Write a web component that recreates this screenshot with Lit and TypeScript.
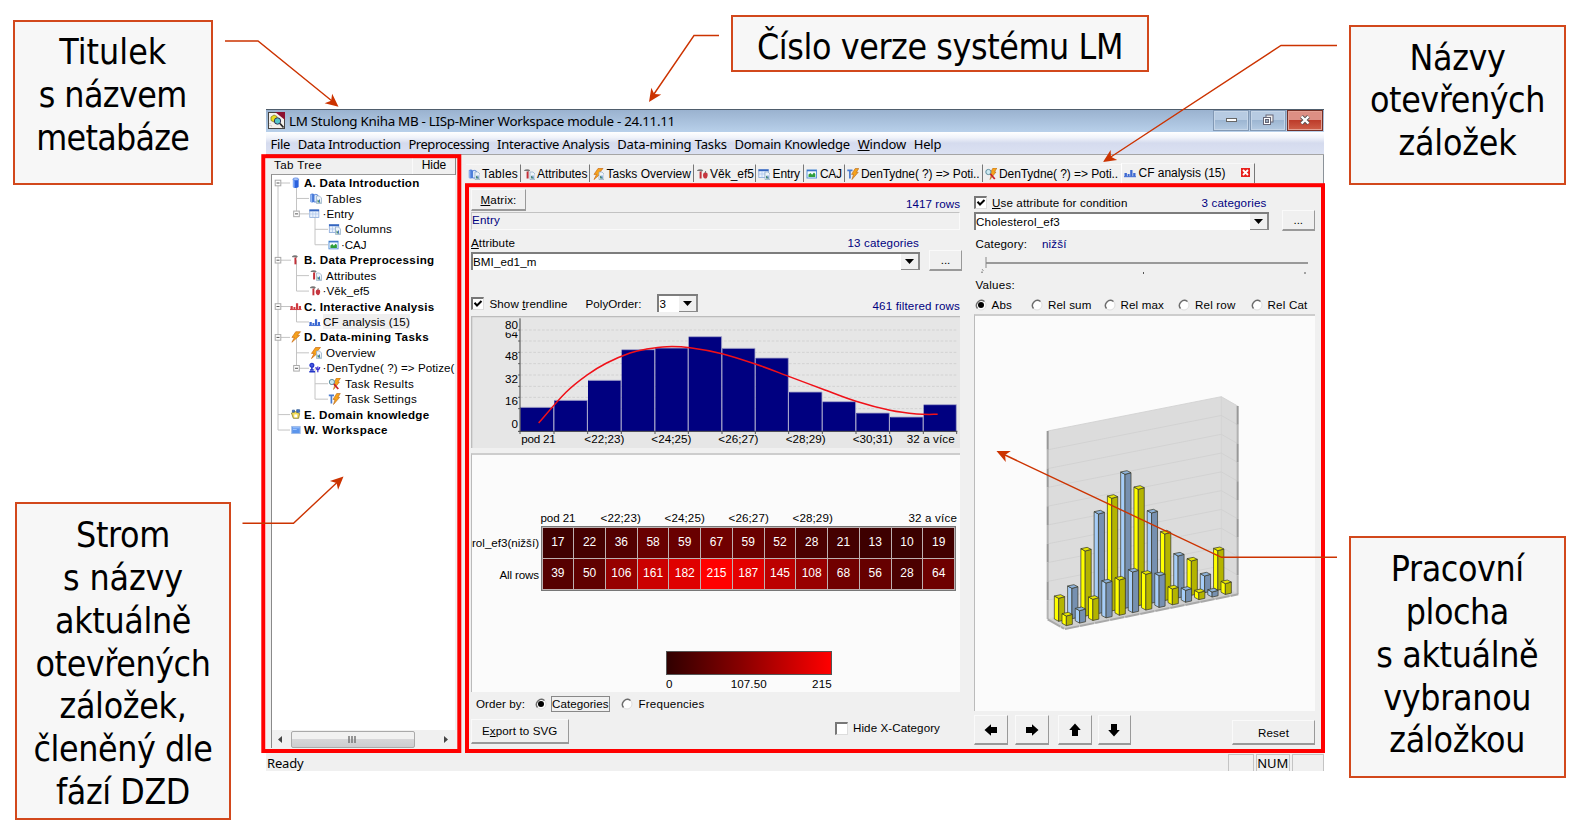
import { LitElement, html, svg, css } from "lit";
import { customElement, property } from "lit/decorators.js";

/* A one-line label whose tracking is adjusted so that it spans exactly `w` pixels.
   An ampersand marks the accelerator letter that follows it. */
@customElement("fit-text")
class FitText extends LitElement {
  @property() text = "";
  @property({ type: Number }) w = 0;
  static styles = css`
    :host { display: inline-block; white-space: pre; flex: none; }
    u { text-decoration-thickness: 1px; text-underline-offset: 1px; }
  `;
  render() {
    const i = this.text.indexOf("&");
    return i < 0
      ? html`<span>${this.text}</span>`
      : html`<span>${this.text.slice(0, i)}<u>${this.text[i + 1]}</u>${this.text.slice(i + 2)}</span>`;
  }
  updated() {
    const s = this.renderRoot.querySelector("span") as HTMLElement;
    s.style.letterSpacing = "0px";
    const n = this.text.replace("&", "").length;
    const natural = s.getBoundingClientRect().width;
    if (this.w && n) {
      s.style.letterSpacing = (this.w - natural) / n + "px";
      this.style.width = this.w + "px";
    }
  }
}

const t = (text: string, w: number, cls = "") => html`<fit-text class=${cls} .text=${text} .w=${w}></fit-text>`;

const doc = svg`<path d="M7 4h3l2 2v5.500H7z" fill="#eef4fa" stroke="#8fabc4" stroke-width=".7"/><path d="M8 10.500v-3l1.300 1 2 2z" fill="#4a8c6c"/><path d="M10 7.500v3" stroke="#4677c8"/>`;
const hammer = svg`<path d="M1 2.200Q3 .6 6 1.400L7.200 2.400 6 3.600H4.600V3H1.400z" fill="#777"/><path d="M3.600 3.500h2V10.500H3.600z" fill="#c33038"/>`;
const bars = (c: string) => svg`<path d="M.5 6h2.400v3.500H.5zM3.600 7h2v2.500h-2zM6.200 3h2.300v6.500H6.200zM9.200 6h2.300v3.500H9.200z" fill=${c}/><path d="M0 9.700h12" stroke=${c} stroke-width="1"/>`;
const bolt = svg`<path d="M6 .5h5L7.600 4.400H10L2 11.500 4.600 6.400H2z" fill="#f6a21c" stroke="#c96a12" stroke-width=".7"/>`;
const table = svg`<rect x=".8" y="1.500" width="9.500" height="8" fill="#eaf2fd" stroke="#86a6d8" stroke-width=".8"/><path d="M.5 2.300h10" stroke="#3565c0" stroke-width="1.800"/><path d="M4 3v6.500M7 3v6.500M1 6h9" stroke="#a9c3ea" stroke-width=".7"/>`;
const icons: Record<string, unknown> = {
  db: svg`<path d="M3 2v8.200q3 2 6 0V2z" fill="#2c62dd"/><path d="M4 2.500v8" stroke="#8db6ff" stroke-width="1.400"/><ellipse cx="6" cy="2" rx="3" ry="1.300" fill="#b3cdf8" stroke="#2c62dd" stroke-width=".6"/>`,
  tables: svg`<path d="M.8 2.200q2-1.400 4 0v7.600q-2 1.400-4 0z" fill="#4c7edb"/><path d="M1.800 2.500v8" stroke="#a7c5fa"/><path d="M4.500 3q1.600-1.300 3.800 0v7H4.500z" fill="#dce9fb" stroke="#3c6fd0" stroke-width=".8"/>${doc}`,
  table,
  columns: svg`${table}${doc}`,
  caj: svg`<rect x="1" y="2" width="9.500" height="8" fill="#f4fbff" stroke="#5b95d8"/><path d="M1 2.600h9.500" stroke="#3b74c8" stroke-width="1.400"/><path d="M2.500 9V6.500l2-1.500 1.600 1.800L8 4.600 9.300 6v3z" fill="#2e9e3b"/>`,
  hammer,
  hammerdoc: svg`${hammer}${doc}`,
  hammerapple: svg`${hammer}<path d="M9.300 4.500q2.600-.3 2.400 2.400Q11.300 10.600 9.200 10.500 7.200 10.400 7 7.400 7 4.300 9.300 4.500z" fill="#c5363f"/><path d="M9.200 5l.5-2" stroke="#555" stroke-width=".8"/>`,
  red: bars("#cf3a40"),
  blue: bars("#3c68d2"),
  bolt,
  boltdoc: svg`${bolt}${doc}`,
  task: svg`<circle cx="3" cy="3.200" r="2" fill="#4a5ae0" stroke="#2436c8" stroke-width="1.300"/><path d="M3 5v3M.3 9.800h6M1 8h4" stroke="#2436c8" stroke-width="1.600"/><path d="M7.200 5q.4 3 2 3T11.200 5M9.200 4.500v6" fill="none" stroke="#3a2fd0" stroke-width="1.300"/>`,
  results: svg`<path d="M8 0h4L9.500 4H11L5 11.500 6.400 6H4.500z" fill="#f6a21c" stroke="#a85c12" stroke-width=".5"/><circle cx="3.400" cy="4" r="2.600" fill="#cfeaf2" stroke="#5f8fa0"/><path d="M5.400 6l4.400 5" stroke="#c8202c" stroke-width="1.800"/>`,
  settings: svg`<path d="M.3 2.300h5.200M2.900 2.500v8" stroke="#4a7bd0" stroke-width="1.700"/><path d="M8.200.5h3.600L9.400 4.300h1.800L5 11.500 6.500 6.400h-2z" fill="#f6a21c" stroke="#b3661a" stroke-width=".6"/>`,
  know: svg`<path d="M1.500 5l4-1.500 4.500 2-1 5H3.500z" fill="#f3dc55" stroke="#7d7428" stroke-width=".8"/><path d="M2.500 2h2.200v2H2.500zM7 1.500h3v2.700H7z" fill="#4778c9" stroke="#335e94" stroke-width=".8"/><path d="M4.500 6.500h3v3h-3z" fill="#fff"/>`,
  space: svg`<rect x="1.800" y="2.300" width="8.800" height="7.400" fill="#5b95ec" stroke="#9fbce8"/><path d="M3 3.700h7M3 5.400h4" stroke="#a4c8ff"/>`,
};
const icon = (name: string, w = 12) => html`<svg class="ic" width=${w} height="12" viewBox="0 0 12 12">${icons[name]}</svg>`;

/* label, text width, level, icon, expander, icon x, text x (within the tree) */
const tree: [string, number, number, string, boolean, number, number][] = [
  ["A. Data Introduction", 115.5, 0, "db", true, 18, 32],
  ["Tables", 36, 1, "tables", false, 37, 54],
  ["·Entry", 31.5, 1, "table", true, 37, 50.5],
  ["Columns", 47, 2, "columns", false, 56, 73],
  ["·CAJ", 25.5, 2, "caj", false, 56, 69],
  ["B. Data Preprocessing", 130.5, 0, "hammer", true, 19, 32],
  ["Attributes", 50.5, 1, "hammerdoc", false, 37, 54],
  ["·Věk_ef5", 47, 1, "hammerapple", false, 37, 50.5],
  ["C. Interactive Analysis", 130.5, 0, "red", true, 18, 32],
  ["CF analysis (15)", 87, 1, "blue", false, 37, 51],
  ["D. Data-mining Tasks", 125, 0, "bolt", true, 18, 32],
  ["Overview", 49.5, 1, "boltdoc", false, 37, 54],
  ["·DenTydne( ?) => Potize(", 132, 1, "task", true, 37, 50.5],
  ["Task Results", 69, 2, "results", false, 56, 73],
  ["Task Settings", 72, 2, "settings", false, 56, 73],
  ["E. Domain knowledge", 125.5, 0, "know", false, 18, 32],
  ["W. Workspace", 84, 0, "space", false, 18, 32],
];

const cats = ["pod 21", "", "<22;23)", "", "<24;25)", "", "<26;27)", "", "<28;29)", "", "<30;31)", "", "32 a více"];
const filtered = [17, 22, 36, 58, 59, 67, 59, 52, 28, 21, 13, 10, 19];
const all = [39, 50, 106, 161, 182, 215, 187, 145, 108, 68, 56, 28, 64];
const heat = (v: number) => `rgb(${Math.round(48 + (207 * v) / 215)},0,0)`;

/* Smooth path through a list of points. */
const spline = (p: number[][]) => p.slice(1).reduce((d, b, k) => {
  const a = p[k], z = p[k - 1] ?? a, c = p[k + 2] ?? b;
  return d + `C${a[0] + (b[0] - z[0]) / 6} ${a[1] + (b[1] - z[1]) / 6} ${b[0] - (c[0] - a[0]) / 6} ${b[1] - (c[1] - a[1]) / 6} ${b[0]} ${b[1]}`;
}, `M${p[0][0]} ${p[0][1]}`);

@customElement("app-root")
class AppRoot extends LitElement {
  static styles = css`
    :host { display: block; position: relative; width: 1582px; height: 840px; overflow: hidden; background: #fff;
      font: 11.6px/15px "Liberation Sans", Arial, sans-serif; color: #000; }
    * { box-sizing: border-box; }
    svg { display: block; flex: none; }
    .callout { position: absolute; background: #f7f7f7; border: 2px solid #d2481c; display: flex; flex-direction: column;
      align-items: center; font: 35.4px/42.85px "DejaVu Sans Condensed", "DejaVu Sans", sans-serif; }
    .over { position: absolute; left: 0; top: 0; }
    .window { position: absolute; left: 266px; top: 109px; width: 1058px; height: 662px; background: #f0f0f0;
      display: flex; flex-direction: column; }
    .title { height: 23px; background: linear-gradient(#9ab2cf, #b8d0ea); border-top: 1px solid #4f5d6c; display: flex;
      padding-left: 2px; font: 13.4px/22px "Noto Sans", "Open Sans", sans-serif; }
    .title .cap { margin-left: 4px; line-height: 23px; }
    .title svg { margin-top: 2px; }
    .wbtns { margin-left: auto; display: flex; gap: 1px; padding-right: 1px; }
    .wb { width: 36px; height: 20.5px; border: 1px solid #8299b5; box-shadow: inset 0 0 0 1px #c6d6e8; background: linear-gradient(#b7cbe2 45%, #9db6d2 50%, #b4cae2); display: grid; place-items: center; }
    .wb.x { border-color: #743027; box-shadow: inset 0 0 0 1px #e4a093; background: linear-gradient(#dd8f84 45%, #bd3c2b 50%, #cf5f49); }
    .wb svg { margin: 0; }
    .menu { height: 23px; background: linear-gradient(#fff, #f0f3fa 25%, #d5dbee 50%, #dbe1f2); border-bottom: 1px solid #a5a5a5;
      padding-left: 4.5px; display: flex; gap: 7.7px; font: 13px/24px "Noto Sans", "Open Sans", sans-serif; }
    .work { flex: 1; display: flex; min-height: 0; }
    .side { width: 191px; height: 593px; display: flex; flex-direction: column; padding-top: 2px; }
    .sidehead { height: 17px; display: flex; justify-content: space-between; padding: 0 1px 0 8px; line-height: 16px; }
    .hide { width: 44px; height: 18px; border: 1px solid #fafafa; border-right-color: #888; border-bottom-color: #888; text-align: center; line-height: 14px; font-size: 12px; }
    .treebox { flex: 1; margin: 0 2px 0 5px; background: #fff; border-left: 1px solid #8a8a8a; border-top: 1px solid #999; display: flex; flex-direction: column; }
    .tree { flex: 1; display: grid; grid-template-columns: 1fr; position: relative; padding-top: .1px; overflow: hidden; align-content: start; }
    .node { height: 15.44px; display: flex; align-items: center; overflow: hidden; white-space: nowrap; z-index: 1; line-height: 15.4px; }
    .lead { flex: none; display: flex; }
    .b { font-weight: bold; }
    .sel { background: #efefef; }
    .lines { position: absolute; left: 0; top: 0; }
    .hscroll { height: 18px; background: #f0f0f0; display: flex; align-items: center; justify-content: space-between; padding: 0 7px 0 6px; }
    .thumb { width: 124px; height: 17px; border: 1px solid #a9a9a9; border-radius: 2px; background: linear-gradient(#f1f1f1 45%, #d6d6d8 50%, #cdcdcf); display: grid; place-items: center; margin-right: 21px; }
    .main { flex: 1; margin-left: 11px; display: flex; flex-direction: column; border-right: 1px solid #8b9299; }
    .tabs { height: 29px; display: flex; padding-top: 9px; font-size: 12px; margin-left: -2.5px; }
    .tab { height: 18px; display: flex; border-top: 1px solid #f8f8f8; border-right: 1px solid #777; line-height: 18px; }
    .tab .ic { margin: 3px 2.5px 0 2px; }
    .tab.on { height: 20px; margin-top: -1px; border-left: 1px solid #fff; }
    .tab.last { border-right: 0; }
    .close { width: 9px; height: 9px; background: #e8201c; margin: 4px 4px 0 15px; }
    .page { height: 569px; padding: 2.6px 0 0 3px; display: flex; gap: 14px; }
    .lc { width: 489px; display: flex; flex-direction: column; }
    .rc { width: 341px; display: flex; flex-direction: column; }
    .row { display: flex; align-items: flex-start; flex: none; }
    .sb { justify-content: space-between; }
    .blue { color: #00007f; }
    .btn { border: 1px solid #fafafa; border-right: 1.5px solid #999; border-bottom: 2px solid #999; display: grid; place-items: center; background: #f0f0f0; flex: none; }
    .field { border-top: 1.5px solid #c2c2c2; border-left: 1px solid #c8c8c8; border-right: 1px solid #fafafa; border-bottom: 1px solid #fafafa; height: 18.5px; line-height: 14px; margin-top: 1px; }
    .combo { background: #fff; border-top: 2px solid #7d7d7d; border-left: 2px solid #7d7d7d; height: 18px; display: flex; justify-content: space-between; line-height: 16px; }
    .drop { width: 19px; background: #f0f0f0; border-right: 2px solid #8a8a8a; border-bottom: 1.5px solid #8a8a8a; display: grid; place-items: center; }
    .check { width: 13px; height: 13px; background: #fff; border: 2px solid #777; border-right: 1px solid #ddd; border-bottom: 1px solid #ddd; flex: none; }
    .radio { width: 12px; height: 12px; margin: 2px 0; flex: none; }
    .panel { background: #fbfbfb; border-left: 1px solid #bbb; border-top: 2px solid #cdcdcd; flex: none; overflow: hidden; }
    .heat { height: 239.5px; display: flex; flex-direction: column; }
    .heatcols { height: 15px; margin: 55px 0 0 68.5px; display: grid; grid-template-columns: repeat(13, 32px); white-space: nowrap; }
    .heatbody { display: flex; justify-content: flex-end; margin: 1.4px 4px 0 0; }
    .rl { display: flex; flex-direction: column; align-items: flex-end; margin-right: 1.5px; }
    .rl fit-text { line-height: 33px; height: 32.4px; }
    .grid { display: grid; grid-template-columns: repeat(13, 1fr); width: 417.5px; height: 65px; gap: 1px; padding: 1px; background: #bdb0b0; border: 1.3px solid #777; color: #fff; }
    .cell { display: grid; place-items: center; font-size: 12px; }
    .legend { width: 166px; margin: 59.8px 0 0 194px; }
    .ramp { height: 24px; border: 1px solid #555; background: linear-gradient(90deg, #300000, #800 45%, #f00); }
    .focus { border: 1px solid #888; height: 15.5px; line-height: 14px; padding: 0 .5px; }
    .status { height: 18px; display: flex; justify-content: space-between; font: 13px/20px "Noto Sans", "Open Sans", sans-serif; padding-left: 1px; }
    .cells { display: flex; gap: 1.5px; padding-top: 1px; }
    .sc { height: 17px; border: 1px solid #c4c4c4; border-bottom: 0; display: grid; place-items: center; line-height: 16px; }
  `;

  callout(x: number, y: number, w: number, h: number, pad: number, lines: [string, number][]) {
    return html`<div class="callout" style="left:${x}px;top:${y}px;width:${w}px;height:${h}px;padding-top:${pad}px">
      ${lines.map(([s, lw]) => t(s, lw + 3))}
    </div>`;
  }

  radio(on = false) {
    return html`<svg class="radio" viewBox="0 0 12 12"><circle cx="6" cy="6" r="5" fill="#fff" stroke="#ddd"/><path d="M2.500 9.500A5 5 0 0 1 9.500 2.500" fill="none" stroke="#6c6c6c" stroke-width="1.400"/>${on ? svg`<circle cx="6" cy="6" r="3" fill="#000"/>` : ""}</svg>`;
  }

  check(on: boolean, mt: number) {
    return html`<div class="check" style="margin-top:${mt}px"><svg width="10" height="10" viewBox="0 0 10 10">${on ? svg`<path d="M1.500 3.800L4 6.500 8.500 2" fill="none" stroke="#000" stroke-width="2"/>` : ""}</svg></div>`;
  }

  combo(text: string, tw: number, w: number, pad = 0) {
    return html`<div class="combo" style="width:${w}px;padding-left:${pad}px">${t(text, tw)}<div class="drop"><svg width="9" height="5"><path d="M0 0h9L4.500 5z"/></svg></div></div>`;
  }

  treeLines() {
    const y = (i: number) => 8 + i * 15.44;
    return svg`<svg class="lines" width="182" height="280" fill="none" stroke="#c4c4c4" stroke-width="1">
      <path d="M6 ${y(0)}V${y(16)}M24.500 ${y(0)}V${y(2)}M43 ${y(2)}V${y(4)}M24.500 ${y(5)}V${y(7)}M24.500 ${y(8)}V${y(9)}M24.500 ${y(10)}V${y(12)}M43 ${y(12)}V${y(14)}"/>
      ${tree.map(([, , l, , , ix], i) => svg`<path d="M${6 + l * 18.5} ${y(i)}H${ix}"/>`)}
      ${tree.map(([, , l, , e], i) => e ? svg`<rect x=${3.2 + l * 18.5} y=${y(i) - 2.8} width="5.600" height="5.600" fill="#fff" stroke="#aaa"/><path d="M${4.5 + l * 18.5} ${y(i)}h3" stroke="#555"/>` : "")}
    </svg>`;
  }

  chart() {
    const edge = [180, 282, 383, 484, 585, 685, 786, 886, 986, 1087, 1188, 1289, 1390, 1490];
    const top = [352, 331, 271, 179, 174, 140, 175, 204, 306, 335, 369, 381, 344];
    const lab: [string, number, number][] = [["pod 21", 184, 103], ["<22;23)", 373, 120], ["<24;25)", 574, 120], ["<26;27)", 775, 120], ["<28;29)", 977, 120], ["<30;31)", 1178, 120], ["32 a více", 1340, 144]];
    const trend = spline([[236, 399], [318, 307], [383, 254], [440, 219], [510, 189], [560, 177], [620, 170], [690, 173], [786, 191], [886, 222], [986, 259], [1087, 297], [1188, 334], [1290, 361], [1370, 372], [1433, 373]]);
    return html`<svg width="489" height="132" viewBox="33 78 1467 396" font-family="Liberation Sans" font-size="35" style="margin-top:2px">
      <defs><clipPath id="c64"><rect x="120" y="127" width="58" height="30"/></clipPath></defs>
      <rect x="33" y="78" width="1467" height="396" fill="#e6e6e6"/>
      <path d="M33 80H1500M35 78V474" stroke="#bcbcbc" stroke-width="4"/>
      ${[120, 153, 187, 221, 255, 289, 322, 356].map((y) => svg`<path d="M181 ${y}H1490" stroke="#d2d2d2" stroke-width="3" stroke-dasharray="8 5"/><path d="M174 ${y}h6" stroke="#666" stroke-width="3"/>`)}
      ${top.map((y, i) => svg`<rect x=${edge[i] + 1} y=${y} width=${edge[i + 1] - edge[i] - 2} height=${424 - y} fill="#000080"/><path d="M${edge[i] + 2} ${y}H${edge[i + 1] - 1}V424" fill="none" stroke="#aaaacc" stroke-width="2.500"/>`)}
      <path d="M180 85V426M174 424H1492" stroke="#444" stroke-width="3" fill="none"/>
      ${edge.map((x) => svg`<path d="M${x} 424v8" stroke="#555" stroke-width="3"/>`)}
      <path d=${trend} fill="none" stroke="#f01018" stroke-width="4.500"/>
      ${([["80", 116], ["48", 210], ["32", 280], ["16", 346], ["0", 414]] as [string, number][]).map(([s, y]) => svg`<text x="174" y=${y} text-anchor="end">${s}</text>`)}
      <text x="174" y="144" text-anchor="end" clip-path="url(#c64)">64</text>
      ${lab.map(([s, x, w]) => svg`<text x=${x} y="460" textLength=${w}>${s}</text>`)}
    </svg>`;
  }

  bar3d(x: number, y: number, b: number, yellow: boolean) {
    const [l, r, tp] = yellow ? ["#ffff00", "#b4b400", "#e6e600"] : ["#a6cdf8", "#7690b0", "#8fb4dc"];
    return svg`<g stroke="#3a3a2a" stroke-width="2.200" stroke-linejoin="round">
      <path d="M${x} ${y}L${x + 13} ${y + 7}V${b}L${x} ${b - 7}z" fill=${l}/>
      <path d="M${x + 13} ${y + 7}L${x + 31} ${y + 2}V${b - 4}L${x + 13} ${b}z" fill=${r}/>
      <path d="M${x} ${y}L${x + 19} ${y - 4}L${x + 31} ${y + 2}L${x + 13} ${y + 7}z" fill=${tp}/></g>`;
  }

  chart3d() {
    const back = [645, 615, 503, 392, 345, 273, 318, 389, 452, 518, 533, 578, 502];
    const front = [698, 682, 648, 599, 590, 566, 573, 577, 617, 621, 628, 626, 601];
    return html`<svg width="207" height="240" viewBox="40 30 621 720" style="margin:75px 0 0 68px">
      <path d="M54 150L575 47V612L54 715z" fill="#dcdcdc"/>
      <path d="M575 47L624 75V640L575 612z" fill="#dadada"/>
      <path d="M54 715L575 612L624 640L105 745z" fill="#cfcfcf"/>
      ${[0, 1, 2, 3, 4, 5, 6, 7, 8, 9, 10].map((k) => svg`<path d="M54 ${150 + 56.4 * k}L575 ${47 + 56.4 * k}L624 ${75 + 56.4 * k}" fill="none" stroke="#d0d0d0" stroke-width="2.500"/>`)}
      <path d="M575 47V612" stroke="#d0d0d0" stroke-width="2.500"/>
      ${[0, 1, 2, 3, 4, 5, 6, 7, 8, 9].map((k) => svg`<path d="M54 ${150 + 56.4 * k}v56.400M624 ${75 + 56.4 * k}v56.400" stroke=${k % 2 ? "#b2b2b2" : "#989898"} stroke-width="6"/>`)}
      <path d="M54 715L103 743M106 744L626 640" stroke="#a8a8a8" stroke-width="6" stroke-dasharray="44 2"/>
      ${back.map((y, i) => this.bar3d(74 + i * 39.8, y, 721 - i * 7.8, i % 2 === 0))}
      ${front.map((y, i) => this.bar3d(97 + i * 39.75, y, 734 - i * 7.8, i % 2 === 0))}
    </svg>`;
  }

  left() {
    return html`<div class="lc">
      <div class="row sb" style="padding-top:2px;height:24px">
        <div class="btn" style="width:55px;height:22px">${t("&Matrix:", 36)}</div>
        <div class="blue" style="padding-top:7px">${t("1417 rows", 54)}</div>
      </div>
      <div class="field blue">${t("Entry", 28)}</div>
      <div class="row sb" style="height:15px;margin-top:4.500px;line-height:16px;padding-right:41px">${t("&Attribute", 44)}<span class="blue">${t("13 categories", 71.5)}</span></div>
      <div class="row" style="height:21px;gap:9px"><div style="padding-top:2px">${this.combo("BMI_ed1_m", 63.5, 449)}</div><div class="btn" style="width:33px;height:21.500px">${t("...", 9.5)}</div></div>
      <div class="row" style="height:20px;margin-top:23px;padding-top:.500px">
        ${this.check(true, 3)}<span style="margin:2px 0 0 5.500px">${t("Show &trendline", 78)}</span>
        <span style="margin:2px 15px 0 18px">${t("PolyOrder:", 56)}</span>${this.combo("3", 7, 41.5, 1)}
        <span class="blue" style="margin:4px 0 0 auto">${t("461 filtered rows", 87.5)}</span>
      </div>
      ${this.chart()}
      <div class="panel heat" style="margin-top:5px">
        <div class="heatcols">${cats.map((c, i) => c && i !== 10 ? html`<span style="margin-left:${i === 12 ? -16 : i ? -4 : 0}px">${t(c, i === 0 ? 35 : i === 12 ? 48.5 : 40.5)}</span>` : html`<span></span>`)}</div>
        <div class="heatbody">
          <div class="rl">${t("rol_ef3(nižší)", 67)}${t("All rows", 39.5)}</div>
          <div class="grid">${[...filtered, ...all].map((v) => html`<div class="cell" style="background:${heat(v)}">${v}</div>`)}</div>
        </div>
        <div class="legend"><div class="ramp"></div>
          <div class="row sb" style="margin-top:1px">${t("0", 6.5)}<span style="margin-left:13px">${t("107.50", 36)}</span>${t("215", 20)}</div></div>
      </div>
      <div class="row" style="height:20px;padding:4px 0 0 5px">
        ${t("Order by:", 49)}<span style="margin:0 4px 0 9.500px">${this.radio(true)}</span><div class="focus">${t("Categories", 56.5)}</div>
        <span style="margin:0 5.500px 0 11px">${this.radio()}</span>${t("Frequencies", 66)}
      </div>
      <div class="row sb" style="margin-top:6.500px;padding-right:20px">
        <div class="btn" style="width:97.500px;height:25.500px">${t("E&xport to SVG", 75.5)}</div>
        <div class="row">${this.check(false, 3)}<span style="margin:1.500px 0 0 5px">${t("Hide X-Category", 87)}</span></div>
      </div>
    </div>`;
  }

  right() {
    const radios: [string, number, number][] = [["Abs", 20.5, 0.5], ["Rel sum", 43.5, 19], ["Rel max", 43.5, 12], ["Rel row", 40.5, 14], ["Rel Cat", 40, 15]];
    const arrow = (rot: number, ml: number) => html`<div class="btn" style="width:33.500px;height:30px;margin-left:${ml}px"><svg width="14" height="14" viewBox="-7 -7 14 14"><path transform="rotate(${rot})" d="M-6.500 0L0-5.800V-3H6V3H0V5.800z"/></svg></div>`;
    return html`<div class="rc">
      <div class="row" style="height:23px;padding-top:8.500px">${this.check(true, 1)}<span style="margin-left:5px">${t("&Use attribute for condition", 135.5)}</span><span class="blue" style="margin-left:74px">${t("3 categories", 65)}</span></div>
      <div class="row sb"><div style="padding-top:2px">${this.combo("Cholesterol_ef3", 84, 295)}</div><div class="btn" style="width:33.500px;height:21.500px">${t("...", 9.5)}</div></div>
      <div class="row" style="margin-top:4.500px;padding-left:1.500px">${t("Category:", 51.5)}<span class="blue" style="margin-left:15px">${t("nižší", 24.5)}</span></div>
      <svg width="341" height="26"><path d="M11 12h323" stroke="#999" stroke-width="2"/><path d="M8 5h4v11l-2 3-2-3z" fill="#f0f0f0"/><path d="M12 6v11" stroke="#888"/><path d="M8 22v-1.500M169.500 23v-2M331 23v-2" stroke="#555"/><path d="M8 18l1.500 2" stroke="#999"/></svg>
      <div class="row" style="padding-left:1.500px;height:20px">${t("Values:", 39.5)}</div>
      <div class="row" style="height:17px">${radios.map(([s, w, g]) => html`<span style="margin:0 5px 0 ${g}px">${this.radio(s === "Abs")}</span>${t(s, w)}`)}</div>
      <div class="panel" style="height:397px">${this.chart3d()}</div>
      <div class="row" style="padding-top:4.500px">${arrow(0, 0)}${arrow(180, 7.5)}${arrow(90, 9.5)}${arrow(-90, 6)}
        <div class="btn" style="width:83px;height:25px;margin:5px 0 0 auto">${t("Reset", 31)}</div></div>
    </div>`;
  }

  render() {
    const menu: [string, number][] = [["File", 19.5], ["Data Introduction", 103], ["Preprocessing", 81], ["Interactive Analysis", 112.5], ["Data-mining Tasks", 109.5], ["Domain Knowledge", 115.5], ["&Window", 48.5], ["Help", 27.5]];
    const tabs: [string, number, string, number][] = [["Tables", 36, "tables", 55], ["Attributes", 50.5, "hammerdoc", 69.5], ["Tasks Overview", 84.5, "boltdoc", 103.5], ["Věk_ef5", 44, "hammerapple", 62.5], ["Entry", 27.5, "columns", 47.5], ["CAJ", 21.5, "caj", 41], ["DenTydne( ?) => Poti..", 118.5, "settings", 138], ["DenTydne( ?) => Poti..", 119, "results", 138.5]];
    const head = (x: number, y: number, a: number) => svg`<path d="M0 0L-13 6L-9.500 0L-13-6z" transform="translate(${x} ${y}) rotate(${a})" fill="#cc3300"/>`;
    return html`
      <div class="window">
        <div class="title">
          <svg width="17" height="17" viewBox="0 0 17 17"><rect x=".5" y=".5" width="16" height="16" fill="#f4f1ec" stroke="#444"/><path d="M7 0h10v8z" fill="#8c1030"/><path d="M3 5l3-2 3 1.500v4L6 10 3 8.500z" fill="#e9dd1e" stroke="#77721c" stroke-width=".7"/><circle cx="9.500" cy="9" r="3.200" fill="#54c7cc" stroke="#335"/><path d="M12 11.500l3.500 4" stroke="#222" stroke-width="1.600"/><path d="M2 11v3h3" stroke="#bbb" fill="none" stroke-dasharray="1 1"/></svg>
          ${t("LM Stulong Kniha MB - LISp-Miner Workspace module - 24.11.11", 386, "cap")}
          <div class="wbtns">
            <div class="wb"><svg width="11" height="5"><rect x=".5" y=".5" width="10" height="3" fill="#fff" stroke="#666"/></svg></div>
            <div class="wb"><svg width="13" height="12"><rect x="4" y="1" width="7" height="7" fill="#eee" stroke="#667"/><rect x="1.500" y="3.500" width="7" height="7" fill="#fff" stroke="#667"/><rect x="3.500" y="5.500" width="3" height="3" fill="#9ab" stroke="#667"/></svg></div>
            <div class="wb x"><svg width="12" height="10"><path d="M2.500 1.500l7 7M9.500 1.500l-7 7" stroke="#555" stroke-width="4"/><path d="M2.500 1.500l7 7M9.500 1.500l-7 7" stroke="#fff" stroke-width="2.400"/></svg></div>
          </div>
        </div>
        <div class="menu">${menu.map(([s, w]) => t(s, w))}</div>
        <div class="work">
          <div class="side">
            <div class="sidehead">${t("Tab Tree", 48)}<div class="hide">${t("Hide", 24.5)}</div></div>
            <div class="treebox">
              <div class="tree">${this.treeLines()}
                ${tree.map(([s, w, l, ic, , ix, tx]) => html`<div class="node"><span class="lead" style="padding-left:${ix}px;width:${tx}px">${icon(ic, tx - ix > 15 ? 13 : 11.5)}</span>${t(s, w, (l ? "" : "b") + (ic === "blue" ? " sel" : ""))}</div>`)}
              </div>
              <div class="hscroll"><svg width="4" height="7"><path d="M4 0v7L0 3.500z" fill="#444"/></svg><div class="thumb"><svg width="9" height="7"><path d="M1 0v7M4 0v7M7 0v7" stroke="#777" stroke-width="1.500"/></svg></div><svg width="4" height="7"><path d="M0 0v7L4 3.500z" fill="#444"/></svg></div>
            </div>
          </div>
          <div class="main">
            <div class="tabs">
              ${tabs.map(([s, w, ic, tw], i) => html`<div class="tab ${i === 7 ? "last" : ""}" style="width:${tw}px">${icon(ic)}${t(s, w)}</div>`)}
              <div class="tab on">${icon("blue")}${t("CF analysis (15)", 87)}<svg class="close" viewBox="0 0 9 9"><path d="M2 2l5 5M7 2l-5 5" stroke="#fff" stroke-width="1.800"/></svg></div>
            </div>
            <div class="page">${this.left()}${this.right()}</div>
          </div>
        </div>
        <div class="status">${t("Ready", 36.5)}<div class="cells"><div class="sc" style="width:26.500px"></div><div class="sc" style="width:34.500px">${t("NUM", 31)}</div><div class="sc" style="width:32.500px"></div></div></div>
      </div>
      ${this.callout(13, 20, 199.5, 165, 9, [["Titulek", 104], ["s názvem", 145], ["metabáze", 150]])}
      ${this.callout(731, 14.5, 418, 57.5, 9.5, [["Číslo verze systému LM", 363]])}
      ${this.callout(1349, 25, 217, 160, 9.5, [["Názvy", 93], ["otevřených", 172], ["záložek", 115]])}
      ${this.callout(15, 502, 216, 318, 10, [["Strom", 91], ["s názvy", 117], ["aktuálně", 133], ["otevřených", 172], ["záložek,", 124], ["členěný dle", 176], ["fází DZD", 131]])}
      ${this.callout(1348.5, 536, 217.5, 242, 10, [["Pracovní", 130], ["plocha", 100], ["s aktuálně", 159], ["vybranou", 145], ["záložkou", 133]])}
      <svg class="over" width="1582" height="840" fill="none">
        <rect x="263.300" y="156.200" width="196" height="594.800" stroke="#f00" stroke-width="4"/>
        <rect x="467" y="185.200" width="856" height="565.800" stroke="#f00" stroke-width="4"/>
        <path d="M225 41H258L332 101M719 35.500H694L654 94M1337 45.500H1281L1110 157.500M242.500 523.300H293.500L337 482.500M1337 557.300H1221.500L1005 455" stroke="#cc3300" stroke-width="1.400"/>
        ${head(338.5, 106.7, 39)}${head(649, 102, 124)}${head(1103, 162, 147)}${head(343.5, 476.5, -43)}${head(996.5, 451, 205)}
      </svg>`;
  }
}
